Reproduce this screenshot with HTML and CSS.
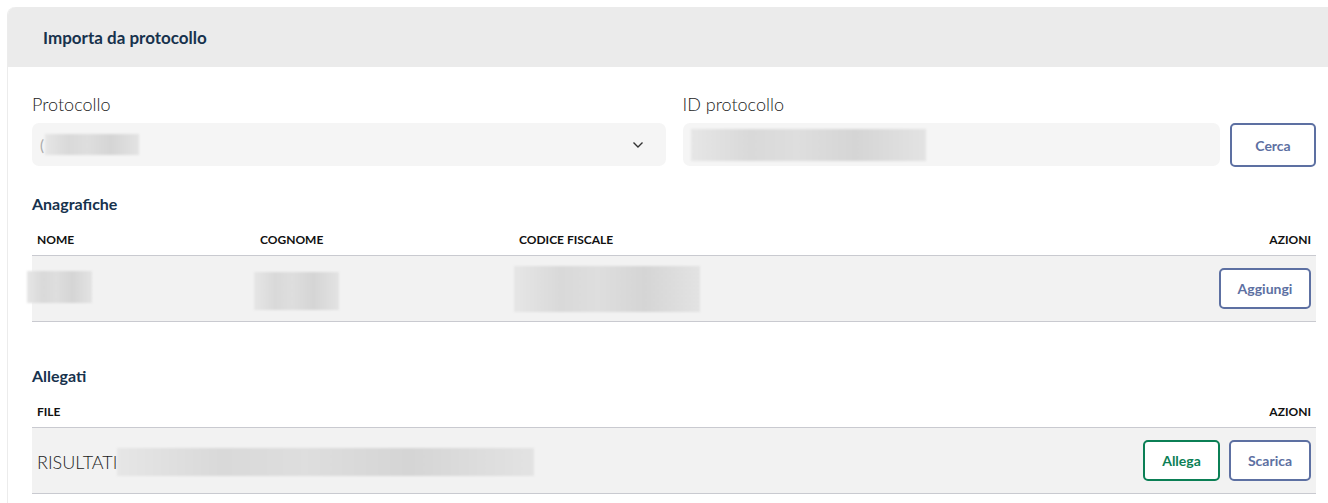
FILE: index.html
```html
<!DOCTYPE html>
<html lang="it">
<head>
<meta charset="utf-8">
<title>Importa da protocollo</title>
<link rel="stylesheet" href="styles.css">
</head>
<body>
<div class="card">
  <div class="card-header">Importa da protocollo</div>
  <div class="card-body">
    <div class="form-row">
      <div class="field">
        <label class="label">Protocollo</label>
        <div class="select">
          <span class="paren">(</span><span class="blur blur-select"></span>
          <svg class="chev" width="12" height="8" viewBox="0 0 12 8"><path d="M1.5 1.5 L6 6 L10.5 1.5" fill="none" stroke="#333" stroke-width="1.4"/></svg>
        </div>
      </div>
      <div class="field">
        <label class="label">ID protocollo</label>
        <div class="input-group">
          <div class="input"><span class="blur blur-id"></span></div>
          <button class="btn btn-blue btn-cerca">Cerca</button>
        </div>
      </div>
    </div>

    <h3 class="section-title first">Anagrafiche</h3>
    <div class="table">
      <div class="thead grid-ana">
        <div class="th">Nome</div>
        <div class="th">Cognome</div>
        <div class="th">Codice fiscale</div>
        <div class="th right">Azioni</div>
      </div>
      <div class="trow grid-ana">
        <div class="td"><span class="blur blur-name"></span></div>
        <div class="td"><span class="blur blur-surname"></span></div>
        <div class="td"><span class="blur blur-cf"></span></div>
        <div class="td right"><button class="btn btn-blue btn-aggiungi">Aggiungi</button></div>
      </div>
    </div>

    <h3 class="section-title second">Allegati</h3>
    <div class="table">
      <div class="thead grid-all">
        <div class="th">File</div>
        <div class="th right">Azioni</div>
      </div>
      <div class="trow grid-all">
        <div class="td file"><span class="fname">RISULTATI</span><span class="blur blur-file"></span></div>
        <div class="td right actions">
          <button class="btn btn-green btn-allega">Allega</button>
          <button class="btn btn-blue btn-scarica">Scarica</button>
        </div>
      </div>
    </div>
  </div>
</div>
</body>
</html>
```

FILE: styles.css
```css
html, body {
  margin: 0;
  padding: 0;
  background: #ffffff;
  overflow: hidden;
}
body {
  padding: 7px 0 0 8px;
  font-family: Lato, "Noto Sans", "Liberation Sans", sans-serif;
  color: #1c1c1c;
}
.card {
  width: 1332px;
  height: 520px;
  border-radius: 8px 8px 0 0;
  background: #fff;
  box-shadow: -1px 0 0 #ececec;
}
.card-header {
  height: 60px;
  background: #ebebeb;
  border-radius: 8px 8px 0 0;
  padding-left: 35px;
  display: flex;
  align-items: center;
  font-weight: 700;
  font-size: 17px;
  color: #17324d;
}
.card-body {
  padding: 26px 24px 0 24px;
}
.form-row {
  display: grid;
  grid-template-columns: 1fr 1fr;
  column-gap: 17px;
}
.field {
  display: flex;
  flex-direction: column;
}
.label {
  font-size: 18px;
  font-weight: 300;
  color: #1c1c1c;
  height: 22px;
  line-height: 22px;
  margin-bottom: 8px;
}
.select, .input {
  height: 43px;
  background: #f5f5f5;
  border-radius: 7px;
  display: flex;
  align-items: center;
  position: relative;
}
.select {
  padding-left: 8px;
}
.paren {
  font-size: 15px;
  color: #aaa;
  margin-right: 1px;
}
.chev {
  position: absolute;
  right: 22px;
  top: 18px;
}
.input-group {
  display: flex;
  gap: 10px;
}
.input {
  flex: 1;
  padding-left: 8px;
}
.blur {
  display: inline-block;
  background: linear-gradient(90deg, #e6e6e6 0%, #d9d9d9 25%, #dedede 45%, #d5d5d5 70%, #e3e3e3 100%);
  filter: blur(1.2px);
}
.blur-select { width: 94px; height: 21px; }
.blur-id { width: 235px; height: 32px; }
.btn {
  font-family: inherit;
  font-weight: 700;
  font-size: 14px;
  background: #fff;
  border-radius: 5px;
  border: 2px solid #5c6fa0;
  color: #5c6fa0;
  padding: 0;
  cursor: pointer;
}
.btn-blue { border-color: #5d70a2; color: #5d70a2; }
.btn-green { border-color: #0b7f55; color: #0b7f55; }
.btn-cerca { width: 86px; height: 44px; }
.btn-aggiungi { width: 92px; height: 41px; }
.btn-allega { width: 77px; height: 41px; }
.btn-scarica { width: 82px; height: 41px; }

.section-title {
  margin: 0;
  font-size: 16px;
  font-weight: 700;
  color: #17324d;
  height: 20px;
  line-height: 20px;
}
.section-title.first { margin-top: 27px; }
.section-title.second { margin-top: 44px; }

.table {
  margin-top: 16px;
}
.grid-ana {
  display: grid;
  grid-template-columns: 223px 259px 1fr 200px;
}
.grid-all {
  display: grid;
  grid-template-columns: 1fr 300px;
}
.thead {
  height: 25px;
  border-bottom: 1px solid #c9cad0;
}
.th {
  font-size: 12px;
  font-weight: 700;
  text-transform: uppercase;
  color: #111;
  padding: 0 5px;
  line-height: 20px;
}
.right { text-align: right; }
.trow {
  height: 65px;
  background: #f2f2f2;
  border-bottom: 1px solid #c9cad0;
}
.td {
  display: flex;
  align-items: center;
  padding: 0 5px;
}
.td.right { justify-content: flex-end; }
.blur-name { width: 65px; height: 32px; margin-left: -10px; margin-top: -4px; }
.blur-surname { width: 85px; height: 38px; margin-left: -6px; margin-top: 4px; }
.blur-cf { width: 186px; height: 46px; margin-left: -5px; margin-top: 0; }
.file { padding-top: 2px; }
.fname {
  font-size: 18px;
  font-weight: 300;
  color: #1c1c1c;
}
.blur-file { width: 417px; height: 28px; margin-left: 0; }
.actions { gap: 9px; }
```
